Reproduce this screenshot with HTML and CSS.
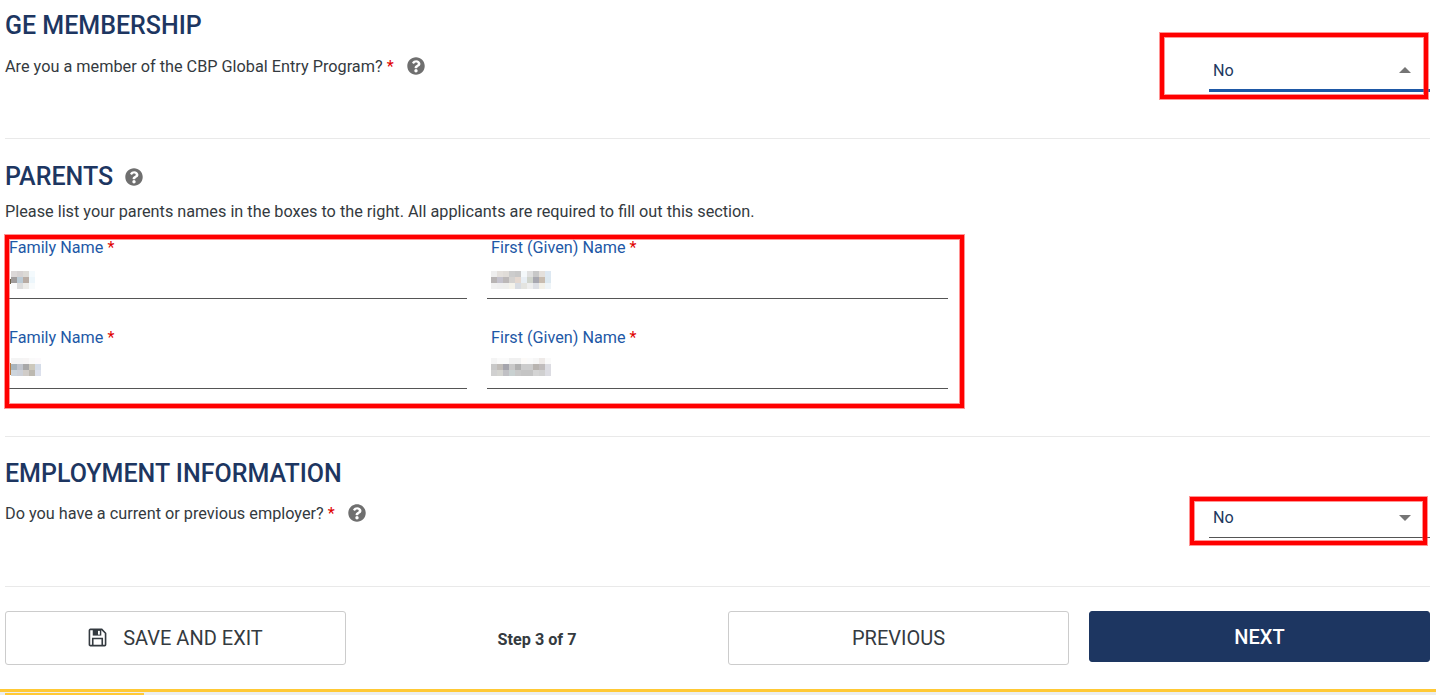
FILE: index.html
```html
<!DOCTYPE html>
<html lang="en">
<head>
<meta charset="utf-8">
<title>Application Step 3</title>
<link rel="stylesheet" href="styles.css">
</head>
<body>
<svg class="defs" width="0" height="0" aria-hidden="true">
  <symbol id="help" viewBox="0 0 512 512"><path d="M504 256c0 137-111 248-248 248S8 393 8 256 119 8 256 8s248 111 248 248zM263 90c-54 0-89 23-116 63-4 5-3 12 3 16l35 26c5 4 13 3 17-2 18-23 30-36 58-36 21 0 47 13 47 34 0 15-13 23-34 35-25 14-57 31-57 74v5c0 7 5 12 12 12h56c7 0 12-5 12-12v-2c0-29 86-31 86-110 0-60-62-103-119-103zm-7 254c-26 0-47 21-47 47s21 47 47 47 47-21 47-47-21-47-47-47z"/></symbol>
</svg>
<main class="page">
  <section class="section section-ge">
    <div class="row">
      <div class="lead">
        <h2 class="title">GE MEMBERSHIP</h2>
        <p class="text">Are you a member of the CBP Global Entry Program? <span class="req">*</span><svg class="help help-q"><use href="#help"/></svg></p>
      </div>
      <div class="select select-open">
        <span>No</span><i class="caret caret-up"></i>
      </div>
    </div>
  </section>

  <section class="section section-parents">
    <h2 class="title">PARENTS<svg class="help help-t"><use href="#help"/></svg></h2>
    <p class="text">Please list your parents names in the boxes to the right. All applicants are required to fill out this section.</p>
    <div class="fields">
      <div class="field">
        <label class="label">Family Name <span class="req">*</span></label>
        <svg class="blur blur-left" width="26" height="18" viewBox="0 0 26 18" shape-rendering="crispEdges">
          <rect x="2" y="0" width="6" height="6" fill="#dcd8d8"/><rect x="8" y="0" width="6" height="6" fill="#d6d2d2"/><rect x="14" y="0" width="6" height="6" fill="#dcdad6"/><rect x="20" y="0" width="6" height="6" fill="#f4fafd"/>
          <rect x="2" y="6" width="6" height="6" fill="#a09c9c"/><rect x="8" y="6" width="6" height="6" fill="#bccad4"/><rect x="14" y="6" width="6" height="6" fill="#b8aca4"/><rect x="20" y="6" width="6" height="6" fill="#edf6fb"/>
          <rect x="2" y="12" width="6" height="6" fill="#fbfbfb"/><rect x="8" y="12" width="6" height="6" fill="#dcdcdc"/><rect x="14" y="12" width="6" height="6" fill="#ecebe8"/><rect x="20" y="12" width="6" height="6" fill="#f8fbfc"/>
          <rect x="1" y="8" width="1" height="5" fill="#6d6048"/>
        </svg>
      </div>
      <div class="field">
        <label class="label">First (Given) Name <span class="req">*</span></label>
        <svg class="blur blur-right" width="60" height="18" viewBox="0 0 60 18" shape-rendering="crispEdges">
          <rect x="0" y="0" width="6" height="6" fill="#eeeeee"/><rect x="6" y="0" width="6" height="6" fill="#e4e0dc"/><rect x="12" y="0" width="6" height="6" fill="#e0dcd8"/><rect x="18" y="0" width="6" height="6" fill="#cccccc"/><rect x="24" y="0" width="6" height="6" fill="#c8c8c8"/><rect x="30" y="0" width="6" height="6" fill="#f4f8fa"/><rect x="36" y="0" width="6" height="6" fill="#e0e0e0"/><rect x="42" y="0" width="6" height="6" fill="#c8c8c8"/><rect x="48" y="0" width="6" height="6" fill="#e4e0dc"/><rect x="54" y="0" width="6" height="6" fill="#dde8f2"/>
          <rect x="0" y="6" width="6" height="6" fill="#b8b4b4"/><rect x="6" y="6" width="6" height="6" fill="#c4c2cc"/><rect x="12" y="6" width="6" height="6" fill="#bcb8b8"/><rect x="18" y="6" width="6" height="6" fill="#d4d2d0"/><rect x="24" y="6" width="6" height="6" fill="#e4d8d0"/><rect x="30" y="6" width="6" height="6" fill="#e8eef4"/><rect x="36" y="6" width="6" height="6" fill="#d0d4cc"/><rect x="42" y="6" width="6" height="6" fill="#a8a8b0"/><rect x="48" y="6" width="6" height="6" fill="#c8bcb0"/><rect x="54" y="6" width="6" height="6" fill="#dce8f0"/>
          <rect x="0" y="12" width="6" height="6" fill="#f0f0f0"/><rect x="6" y="12" width="6" height="6" fill="#eeeeee"/><rect x="12" y="12" width="6" height="6" fill="#eeeeec"/><rect x="18" y="12" width="6" height="6" fill="#f4f2ea"/><rect x="24" y="12" width="6" height="6" fill="#d8dce2"/><rect x="30" y="12" width="6" height="6" fill="#e4e4e0"/><rect x="36" y="12" width="6" height="6" fill="#eeeeee"/><rect x="42" y="12" width="6" height="6" fill="#dddfe4"/><rect x="48" y="12" width="6" height="6" fill="#f2f0e8"/><rect x="54" y="12" width="6" height="6" fill="#eef4f8"/>
        </svg>
      </div>
      <div class="field field-second">
        <label class="label">Family Name <span class="req">*</span></label>
        <svg class="blur blur-left" width="32" height="18" viewBox="0 0 32 18" shape-rendering="crispEdges">
          <rect x="2" y="0" width="6" height="6" fill="#f4f4f4"/><rect x="8" y="0" width="6" height="6" fill="#f4f4f4"/><rect x="14" y="0" width="6" height="6" fill="#f6f4f4"/><rect x="20" y="0" width="6" height="6" fill="#fafafa"/><rect x="26" y="0" width="6" height="6" fill="#fcfafc"/>
          <rect x="2" y="6" width="6" height="6" fill="#a8b4bc"/><rect x="8" y="6" width="6" height="6" fill="#c0c4cc"/><rect x="14" y="6" width="6" height="6" fill="#a8a8a8"/><rect x="20" y="6" width="6" height="6" fill="#ccc8bc"/><rect x="26" y="6" width="6" height="6" fill="#d4dce8"/>
          <rect x="2" y="12" width="6" height="6" fill="#ccd4dc"/><rect x="8" y="12" width="6" height="6" fill="#ccd0d8"/><rect x="14" y="12" width="6" height="6" fill="#d0ccc8"/><rect x="20" y="12" width="6" height="6" fill="#bcb8b0"/><rect x="26" y="12" width="6" height="6" fill="#dce0ec"/>
          <rect x="1" y="5" width="1" height="12" fill="#b87a3e"/>
        </svg>
      </div>
      <div class="field field-second">
        <label class="label">First (Given) Name <span class="req">*</span></label>
        <svg class="blur blur-right" width="60" height="18" viewBox="0 0 60 18" shape-rendering="crispEdges">
          <rect x="0" y="0" width="6" height="6" fill="#f4f4f4"/><rect x="6" y="0" width="6" height="6" fill="#fafafa"/><rect x="12" y="0" width="6" height="6" fill="#fafafa"/><rect x="18" y="0" width="6" height="6" fill="#f0f0f0"/><rect x="24" y="0" width="6" height="6" fill="#f0f0f0"/><rect x="30" y="0" width="6" height="6" fill="#fcfaf8"/><rect x="36" y="0" width="6" height="6" fill="#fafafa"/><rect x="42" y="0" width="6" height="6" fill="#f6f6f6"/><rect x="48" y="0" width="6" height="6" fill="#eeeae8"/><rect x="54" y="0" width="6" height="6" fill="#fafafa"/>
          <rect x="0" y="6" width="6" height="6" fill="#c8c8c8"/><rect x="6" y="6" width="6" height="6" fill="#c0bcb8"/><rect x="12" y="6" width="6" height="6" fill="#a4a4ac"/><rect x="18" y="6" width="6" height="6" fill="#c8c8c8"/><rect x="24" y="6" width="6" height="6" fill="#b0b0b0"/><rect x="30" y="6" width="6" height="6" fill="#cccccc"/><rect x="36" y="6" width="6" height="6" fill="#cccccc"/><rect x="42" y="6" width="6" height="6" fill="#b8b4b0"/><rect x="48" y="6" width="6" height="6" fill="#c0bcbc"/><rect x="54" y="6" width="6" height="6" fill="#dcdce2"/>
          <rect x="0" y="12" width="6" height="6" fill="#d0d0d0"/><rect x="6" y="12" width="6" height="6" fill="#d4d4d0"/><rect x="12" y="12" width="6" height="6" fill="#c0c0c4"/><rect x="18" y="12" width="6" height="6" fill="#c8d0d0"/><rect x="24" y="12" width="6" height="6" fill="#c8c8c8"/><rect x="30" y="12" width="6" height="6" fill="#c4c4c4"/><rect x="36" y="12" width="6" height="6" fill="#c4c4c4"/><rect x="42" y="12" width="6" height="6" fill="#d4d4d4"/><rect x="48" y="12" width="6" height="6" fill="#d0d0d0"/><rect x="54" y="12" width="6" height="6" fill="#dcdce2"/>
        </svg>
      </div>
    </div>
  </section>

  <section class="section section-emp">
    <div class="row">
      <div class="lead">
        <h2 class="title">EMPLOYMENT INFORMATION</h2>
        <p class="text">Do you have a current or previous employer? <span class="req">*</span><svg class="help help-q"><use href="#help"/></svg></p>
      </div>
      <div class="select">
        <span>No</span><i class="caret"></i>
      </div>
    </div>
  </section>

  <footer class="actions">
    <button class="btn btn-save" type="button">
      <svg class="save-icon" viewBox="0 0 20 20"><path d="M2.5 1.5h12l4 4v12a1 1 0 0 1-1 1h-15a1 1 0 0 1-1-1v-15a1 1 0 0 1 1-1z" fill="none" stroke="currentColor" stroke-width="1.7"/><path d="M5 2h9v6H5z" fill="currentColor"/><path d="M10.5 3h2v4h-2z" fill="#fff"/><path d="M5 18v-7h10v7" fill="none" stroke="currentColor" stroke-width="1.7"/></svg>
      SAVE AND EXIT
    </button>
    <div class="step">Step 3 of 7</div>
    <button class="btn btn-prev" type="button">PREVIOUS</button>
    <button class="btn btn-next" type="button">NEXT</button>
  </footer>

  <div class="progress"><div class="progress-fill"></div></div>

  <div class="mark mark-1"></div>
  <div class="mark mark-2"></div>
  <div class="mark mark-3"></div>
</main>
</body>
</html>
```
FILE: styles.css
```css
* { box-sizing: border-box; }
html, body { margin: 0; height: 695px; overflow: hidden; background: #fff; }
body { font-family: Roboto, "Liberation Sans", sans-serif; color: #343a40; }
.defs { position: absolute; }
.page { position: relative; height: 695px; padding: 0 6px 0 5px; }
.section { border-bottom: 1px solid #e9e9e9; }
.section-ge { height: 139px; padding-top: 11px; }
.section-parents { height: 298px; padding-top: 23px; }
.section-emp { height: 150px; padding-top: 22px; }
.row { display: flex; justify-content: space-between; align-items: flex-start; }
.title { margin: 0; font-size: 25px; line-height: 29px; font-weight: 500; color: #1d3661; display: flex; align-items: center; }
.text { margin: 16px 0 0; font-size: 16.26px; line-height: 22px; display: flex; align-items: center; white-space: pre-wrap; }
.section-parents .text { margin-top: 10px; }
.section-emp .text { margin-top: 15px; }
.req { color: #e00000; }
.help { fill: #6f6f6f; width: 18px; height: 18px; }
.help-q { margin: -3px 0 0 13px; }
.help-t { margin: 0 0 0 12px; }
.select { width: 221px; height: 35px; display: flex; align-items: center; justify-content: space-between; padding: 0 19px 5px 4px; font-size: 16.2px; border-bottom: 1px solid #555; margin-top: 44px; color: #22395f; }
.select-open { border-bottom: 3px solid #1e58a6; margin-top: 45px; height: 36px; }
.caret { width: 0; height: 0; border-left: 6px solid transparent; border-right: 6px solid transparent; border-top: 6px solid #757575; }
.caret-up { border-top: 0; border-bottom: 6px solid #757575; }
.fields { display: grid; grid-template-columns: 458px 461px; column-gap: 20px; margin: 14px 0 0 4px; width: 939px; }
.field { height: 90px; position: relative; }
.field::after { content: ""; position: absolute; left: 0; right: 0; top: 61px; border-bottom: 1px solid #555; }
.label { display: block; font-size: 16.2px; line-height: 22px; color: #1e58a6; }
.field:nth-child(even) .label { padding-left: 4px; }
.blur { display: block; margin-top: 12px; }
.field-second .blur { margin-top: 9px; }
.blur-right { margin-left: 4px; }
.actions { display: grid; grid-template-columns: 341px 382px 341px 361px; height: 103px; padding-top: 24px; align-items: start; }
.btn { font-family: inherit; font-size: 20px; height: 54px; border: 1px solid #ccc; border-radius: 3px; background: #fff; color: #343a40; display: flex; align-items: center; justify-content: center; padding: 0; }
.btn-next { margin-left: 20px; width: 341px; height: 51px; background: #1d3661; border-color: #1d3661; color: #fff; font-weight: 500; }
.save-icon { width: 19px; height: 19px; margin-right: 16px; margin-top: -2px; color: #343a40; }
.step { font-size: 16.2px; font-weight: 700; text-align: center; line-height: 57px; }
.progress { position: absolute; left: 0; right: 0; top: 689px; height: 6px; background: #eceeee; border-top: 3px solid #ffc935; }
.progress-fill { width: 139px; margin-left: 5px; height: 3px; margin-top: 1px; background: #ffc935; }
.mark { position: absolute; border: 4px solid #f00; box-shadow: 0 0 0 1px rgba(255, 60, 60, .55), inset 0 0 0 1px rgba(255, 60, 60, .55); }
.mark-1 { left: 1160px; top: 33px; width: 268px; height: 66px; }
.mark-2 { left: 5px; top: 235px; width: 959px; height: 173px; }
.mark-3 { left: 1190px; top: 497px; width: 237px; height: 48px; }
```
